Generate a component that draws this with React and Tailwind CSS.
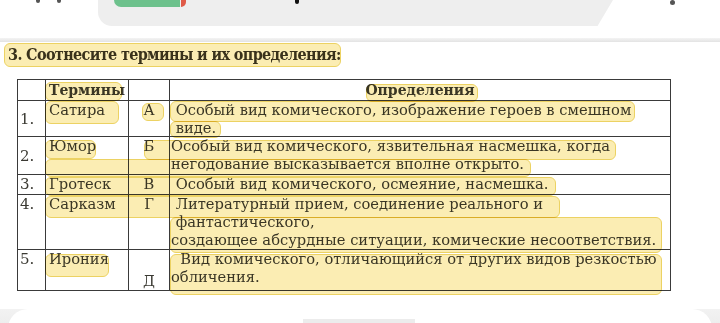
import React from 'react';

const serif = { fontFamily: '"DejaVu Serif", "Liberation Serif", serif' };

const marks = [
  [4, 43, 337, 24],
  [45, 82, 77, 19],
  [45, 101, 74, 23],
  [366, 84, 112, 18],
  [142, 103, 22, 18],
  [170, 101, 465, 21],
  [170, 121, 51, 17],
  [45, 140, 51, 19],
  [144, 140, 472, 20],
  [45, 159, 486, 18],
  [45, 177, 511, 19],
  [45, 196, 515, 22],
  [170, 217, 492, 36],
  [45, 254, 64, 23],
  [170, 254, 492, 41],
];

const rows = [
  { n: '1.', term: 'Сатира', letter: 'А', lines: [' Особый вид комического, изображение героев в смешном', ' виде.'], numAlign: 'self-center', letterAlign: 'self-start' },
  { n: '2.', term: 'Юмор', letter: 'Б', lines: ['Особый вид комического, язвительная насмешка, когда', 'негодование высказывается вполне открыто.'], numAlign: 'self-center', letterAlign: 'self-start' },
  { n: '3.', term: 'Гротеск', letter: 'В', lines: [' Особый вид комического, осмеяние, насмешка.'], numAlign: 'self-start', letterAlign: 'self-start' },
  { n: '4.', term: 'Сарказм', letter: 'Г', lines: [' Литературный прием, соединение реального и', ' фантастического,', 'создающее абсурдные ситуации, комические несоответствия.'], numAlign: 'self-start', letterAlign: 'self-start' },
  { n: '5.', term: 'Ирония', letter: 'Д', lines: ['  Вид комического, отличающийся от других видов резкостью', 'обличения.'], numAlign: 'self-start', letterAlign: 'self-end' },
];

const cell = 'border-r border-b border-[#3a3a3a] flex';

export default function App() {
  return (
    <div className="relative w-[720px] h-[323px] overflow-hidden bg-white text-[#3b3a33]" style={serif}>
      {/* top app bar */}
      <div className="relative h-[38px] bg-white">
        <div className="absolute left-[36px] top-0 w-[4px] h-[3px] bg-[#555] rounded-b" />
        <div className="absolute left-[57px] top-0 w-[4px] h-[3px] bg-[#555] rounded-b" />
        <div className="absolute left-[98px] top-0 w-[515px] h-[26px] bg-[#eeeeee] rounded-bl-[14px] [clip-path:polygon(0_0,100%_0,97%_100%,0_100%)]">
          <div className="absolute left-[16px] top-0 flex h-[7px]">
            <div className="w-[66px] h-[7px] bg-[#6dc18c] rounded-bl-full rounded-br-sm" />
            <div className="ml-[1px] w-[5px] h-[7px] bg-[#df5a48] rounded-br-full" />
          </div>
          <div className="absolute left-[197px] top-0 w-[4px] h-[4px] bg-[#111] rounded-b-full" />
        </div>
        <div className="absolute left-[670px] top-0 w-[5px] h-[5px] bg-[#555] rounded-full" />
      </div>
      <div className="h-[4px] bg-gradient-to-b from-[#f4f4f4] to-[#e3e3e3]" />

      {/* scanned page */}
      <div className="h-[250px] bg-white">
        <div className="ml-[8px] mt-[1px] h-[24px] flex items-center text-[16px] font-bold tracking-[-0.04em] text-[#3a3526]" style={{ fontFamily: '"DejaVu Serif Condensed", "DejaVu Serif", serif', fontStretch: 'condensed' }}>
          3. Соотнесите термины и их определения:
        </div>
        <div className="ml-[17px] mt-[12px] w-[654px] grid grid-cols-[28px_83px_41px_501px] grid-rows-[21px_36px_38px_20px_55px_41px] border-l border-t border-[#3a3a3a] text-[14.7px] leading-[18px]">
          <div className={cell} />
          <div className={`${cell} items-center pl-[3px] font-bold text-[14px]`}>Термины</div>
          <div className={cell} />
          <div className={`${cell} items-center justify-center font-bold text-[14px]`}>Определения</div>
          {rows.map((r) => (
            <React.Fragment key={r.n}>
              <div className={`${cell} pl-[2px] text-[15px]`}>
                <span className={r.numAlign}>{r.n}</span>
              </div>
              <div className={`${cell} pl-[3px]`}>
                <span className="self-start">{r.term}</span>
              </div>
              <div className={`${cell} justify-center`}>
                <span className={r.letterAlign}>{r.letter}</span>
              </div>
              <div className={`${cell} flex-col pl-[1px]`}>
                {r.lines.map((l, i) => (
                  <div key={i} className="whitespace-pre">{l}</div>
                ))}
              </div>
            </React.Fragment>
          ))}
        </div>
      </div>

      {/* bottom sheet */}
      <div className="h-[31px] bg-gradient-to-b from-[#f2f2f2] to-[#e8e8e8]">
        <div className="mt-[16px] mx-[8px] h-[20px] bg-white rounded-t-[22px]">
          <div className="ml-[295px] pt-[10px]">
            <div className="w-[112px] h-[10px] bg-[#ececec]" />
          </div>
        </div>
      </div>

      {/* highlighter marks */}
      {marks.map(([x, y, w, h], i) => (
        <div
          key={i}
          className="absolute rounded-[6px] bg-[#fae593]/70 border border-[#ecd263] mix-blend-multiply pointer-events-none"
          style={{ left: x, top: y, width: w, height: h }}
        />
      ))}
    </div>
  );
}
